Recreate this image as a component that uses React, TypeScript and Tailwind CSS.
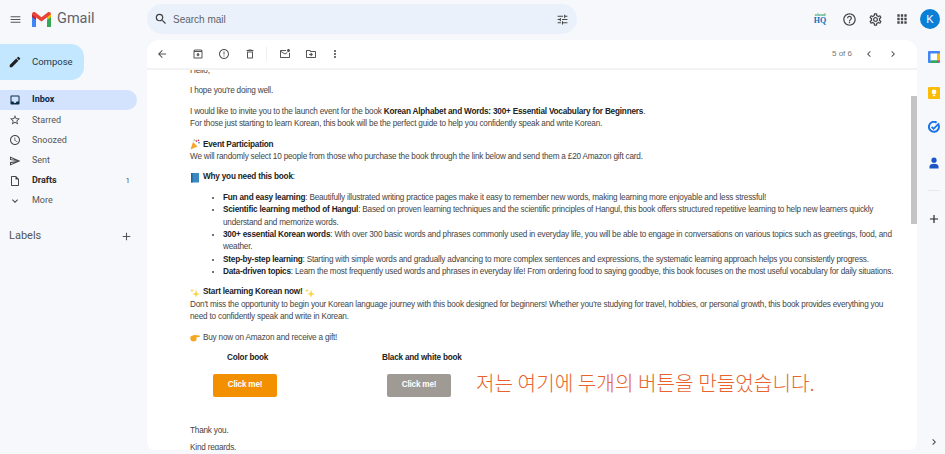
import React from 'react';
import {
  MdMenu, MdSearch, MdTune, MdHelpOutline, MdOutlineSettings, MdApps, MdEdit, MdInbox, MdOutlineStarBorder,
  MdOutlineAccessTime, MdOutlineSend, MdOutlineInsertDriveFile, MdExpandMore, MdAdd, MdArrowBack,
  MdOutlineArchive, MdErrorOutline, MdOutlineDelete, MdOutlineMarkEmailUnread, MdOutlineDriveFileMove,
  MdMoreVert, MdChevronLeft, MdChevronRight,
} from 'react-icons/md';

const navItems = [
  { label: 'Inbox', icon: MdInbox, active: true },
  { label: 'Starred', icon: MdOutlineStarBorder },
  { label: 'Snoozed', icon: MdOutlineAccessTime },
  { label: 'Sent', icon: MdOutlineSend },
  { label: 'Drafts', icon: MdOutlineInsertDriveFile, bold: true, count: '1' },
  { label: 'More', icon: MdExpandMore },
];

const GmailLogo = () => (
  <svg width="19" height="15" viewBox="0 0 19 15">
    <path d="M0 2.2 L0 15 L4 15 L4 5.5 Z" fill="#4285f4" />
    <path d="M15 5.5 L15 15 L19 15 L19 2.2 Z" fill="#34a853" />
    <path d="M0 2.2 C0 0.4 2 -0.6 3.4 0.5 L9.5 5.2 L15.6 0.5 C17 -0.6 19 0.4 19 2.2 L15 5.5 L9.5 9.6 L4 5.5 Z" fill="#ea4335" />
    <path d="M15 5.5 L19 2.2 L19 5 L15 8 Z" fill="#fbbc04" />
    <path d="M0 2.2 L4 5.5 L4 8 L0 5 Z" fill="#c5221f" />
  </svg>
);

const Popper = () => (
  <svg width="10" height="11" viewBox="0 0 10 11" className="shrink-0">
    <path d="M0.5 10.5 L3 3 L7.5 7.5 Z" fill="#f4a62a" />
    <path d="M6 1 L6.6 3" stroke="#e0457b" strokeWidth="1.2" />
    <path d="M8 4 L9.8 3.6" stroke="#3b88c3" strokeWidth="1.2" />
    <circle cx="8.4" cy="1.4" r="0.8" fill="#dd2e44" />
    <circle cx="4.2" cy="1" r="0.7" fill="#77b255" />
  </svg>
);

const BlueBook = () => (
  <svg width="10" height="11" viewBox="0 0 10 11" className="shrink-0">
    <rect x="1" y="1" width="8" height="9.5" fill="#3b88c3" />
    <rect x="1" y="1" width="1.6" height="9.5" fill="#226699" />
  </svg>
);

const Sparkle = () => (
  <svg width="10" height="10" viewBox="0 0 10 10" className="shrink-0">
    <path d="M6 1.5 L7 5 L9.8 6 L7 7 L6 9.8 L5 7 L2.2 6 L5 5 Z" fill="#fbd44a" />
    <path d="M2 0.5 L2.5 2 L4 2.5 L2.5 3 L2 4.5 L1.5 3 L0 2.5 L1.5 2 Z" fill="#fbd44a" />
  </svg>
);

const PointHand = () => (
  <svg width="10" height="9" viewBox="0 0 10 9" className="shrink-0">
    <path d="M0.5 3.5 L4 2 L9.5 2.6 C10 3 10 3.8 9.4 4 L6.5 4.2 L6.5 7 C6 8.4 3 8.8 1.5 8 C0.4 7 0 5 0.5 3.5 Z" fill="#f5a623" />
  </svg>
);

const Line = ({ children }: { children: React.ReactNode }) => <div className="flex items-center gap-[3px]">{children}</div>;

const App: React.FC = () => {
  return (
    <div className="flex flex-col w-[945px] h-[454px] overflow-hidden bg-[#f6f8fc] font-['Liberation_Sans',sans-serif] text-[#444746]">
      {/* Top bar */}
      <header className="flex items-center h-[38px] shrink-0">
        <div className="flex items-center w-[147px] shrink-0 pl-[9px]">
          <MdMenu className="w-[13px] h-[13px] text-[#555]" />
          <span className="ml-[10px]"><GmailLogo /></span>
          <span className="ml-[6px] text-[14.5px] text-[#5f6368] font-['Roboto',sans-serif]">Gmail</span>
        </div>
        <div className="flex items-center w-[430px] h-[30px] rounded-full bg-[#eaf1fb] pl-[7px] pr-[8px]">
          <MdSearch className="w-[14px] h-[14px] text-[#3c4043]" />
          <span className="ml-[5px] text-[10px] text-[#5f6368]">Search mail</span>
          <MdTune className="ml-auto w-[13px] h-[13px] text-[#444746]" />
        </div>
        <div className="flex items-center ml-auto pr-[5px]">
          <div className="flex flex-col items-center w-[16px] leading-none mr-[14px]">
            <span className="text-[4px] font-bold text-[#1aa260]">cloud</span>
            <span className="text-[8px] font-bold text-[#0f6fb8] font-['Liberation_Serif',serif]">HQ</span>
          </div>
          <MdHelpOutline className="w-[15px] h-[15px] text-[#444746]" />
          <MdOutlineSettings className="ml-[11px] w-[15px] h-[15px] text-[#444746]" />
          <MdApps className="ml-[12px] w-[14px] h-[14px] text-[#444746]" />
          <div className="ml-[11px] flex items-center justify-center w-[20px] h-[20px] rounded-full bg-[#0a7fd6] text-white text-[11px]">K</div>
        </div>
      </header>

      <div className="flex flex-1 min-h-0">
        {/* Sidebar */}
        <aside className="flex flex-col w-[147px] shrink-0 font-['Roboto',sans-serif]">
          <div className="mt-[6px] flex items-center w-[84px] h-[36px] rounded-r-[13px] bg-[#c2e7ff] pl-[8px]">
            <MdEdit className="w-[14px] h-[14px] text-[#1f1f1f]" />
            <span className="ml-[10px] text-[9.5px] text-[#1f3a4d]">Compose</span>
          </div>
          <nav className="mt-[10px] flex flex-col">
            {navItems.map(item => (
              <div
                key={item.label}
                className={`flex items-center h-[20.2px] w-[137px] rounded-r-full pl-[9px] pr-[7px] text-[9px] ${item.active ? 'bg-[#d3e3fd] text-[#0b2a4a] font-bold' : item.bold ? 'font-bold text-[#2b2b2b]' : 'text-[#555]'}`}
              >
                <item.icon className={`w-[12px] h-[12px] ${item.active ? 'text-[#0b2a4a]' : 'text-[#444746]'}`} />
                <span className="ml-[11px]">{item.label}</span>
                {item.count && <span className="ml-auto text-[8px] font-normal text-[#555]">{item.count}</span>}
              </div>
            ))}
          </nav>
          <div className="mt-[17px] flex items-center justify-between w-[133px] pl-[9px] text-[11px] text-[#555]">
            <span>Labels</span>
            <MdAdd className="w-[13px] h-[13px]" />
          </div>
        </aside>

        {/* Message card */}
        <main className="flex flex-col w-[770px] h-[410px] mt-[2px] rounded-t-[12px] rounded-b-[8px] bg-white shrink-0 overflow-hidden">
          <div className="flex items-center h-[30px] shrink-0 pl-[9px] pr-[18px] border-b-2 border-[#f3f3f3] text-[#555]">
            <MdArrowBack className="w-[12px] h-[12px]" />
            <MdOutlineArchive className="ml-[24px] w-[12px] h-[12px]" />
            <MdErrorOutline className="ml-[14px] w-[12px] h-[12px]" />
            <MdOutlineDelete className="ml-[14px] w-[12px] h-[12px]" />
            <span className="ml-[10px] h-[14px] w-px bg-[#eee]" />
            <MdOutlineMarkEmailUnread className="ml-[12px] w-[12px] h-[12px]" />
            <MdOutlineDriveFileMove className="ml-[14px] w-[12px] h-[12px]" />
            <MdMoreVert className="ml-[12px] w-[12px] h-[12px]" />
            <span className="ml-auto text-[8px] text-[#777]">5 of 6</span>
            <MdChevronLeft className="ml-[11px] w-[12px] h-[12px]" />
            <MdChevronRight className="ml-[12px] w-[12px] h-[12px]" />
          </div>

          <div className="flex flex-1 min-h-0">
            <div className="flex-1 min-w-0 overflow-hidden pl-[43px] pr-[12px] text-[8.2px] tracking-[-0.2px] leading-[12.3px] text-[#444]">
              <div className="-mt-[5.5px] flex flex-col gap-[8.3px]">
                <p>Hello,</p>
                <p>I hope you're doing well.</p>
                <p>
                  I would like to invite you to the launch event for the book <b className="text-[#222]">Korean Alphabet and Words: 300+ Essential Vocabulary for Beginners</b>.<br />
                  For those just starting to learn Korean, this book will be the perfect guide to help you confidently speak and write Korean.
                </p>
                <div>
                  <Line><Popper /><b className="text-[#222]">Event Participation</b></Line>
                  <p>We will randomly select 10 people from those who purchase the book through the link below and send them a £20 Amazon gift card.</p>
                </div>
                <Line><BlueBook /><span><b className="text-[#222]">Why you need this book</b>:</span></Line>
                <ul className="list-disc pl-[33px]">
                  <li><b className="text-[#222]">Fun and easy learning</b>: Beautifully illustrated writing practice pages make it easy to remember new words, making learning more enjoyable and less stressful!</li>
                  <li><b className="text-[#222]">Scientific learning method of Hangul</b>: Based on proven learning techniques and the scientific principles of Hangul, this book offers structured repetitive learning to help new learners quickly understand and memorize words.</li>
                  <li><b className="text-[#222]">300+ essential Korean words</b>: With over 300 basic words and phrases commonly used in everyday life, you will be able to engage in conversations on various topics such as greetings, food, and weather.</li>
                  <li><b className="text-[#222]">Step-by-step learning</b>: Starting with simple words and gradually advancing to more complex sentences and expressions, the systematic learning approach helps you consistently progress.</li>
                  <li><b className="text-[#222]">Data-driven topics</b>: Learn the most frequently used words and phrases in everyday life! From ordering food to saying goodbye, this book focuses on the most useful vocabulary for daily situations.</li>
                </ul>
                <div>
                  <Line><Sparkle /><b className="text-[#222]">Start learning Korean now!</b><Sparkle /></Line>
                  <p>Don't miss the opportunity to begin your Korean language journey with this book designed for beginners! Whether you're studying for travel, hobbies, or personal growth, this book provides everything you need to confidently speak and write in Korean.</p>
                </div>
                <Line><PointHand /><span>Buy now on Amazon and receive a gift!</span></Line>
                <div className="flex items-end">
                  <div className="flex flex-col w-[197px]">
                    <b className="pl-[37px] text-[#222]">Color book</b>
                    <span className="mt-[9px] ml-[23px] flex items-center justify-center w-[64px] h-[23px] rounded-[2px] bg-[#f39000] text-white font-bold">Click me!</span>
                  </div>
                  <div className="flex flex-col w-[89px]">
                    <b className="whitespace-nowrap -ml-[5px] text-[#222]">Black and white book</b>
                    <span className="mt-[9px] flex items-center justify-center w-[64px] h-[23px] rounded-[2px] bg-[#a09a94] text-white font-bold">Click me!</span>
                  </div>
                  <span className="mb-[1px] whitespace-nowrap font-['Noto_Sans_CJK_KR',sans-serif] font-light text-[20.2px] tracking-normal leading-[26px] text-[#e8642c]">저는 여기에 두개의 버튼을 만들었습니다.</span>
                </div>
                <div className="mt-[20px] flex flex-col gap-[4.5px]">
                  <p>Thank you.</p>
                  <p>Kind regards,</p>
                </div>
              </div>
            </div>
            {/* Scrollbar */}
            <div className="w-[6px] shrink-0">
              <div className="mt-[26px] h-[128px] bg-[#c4c4c4]" />
            </div>
          </div>
        </main>

        {/* Side panel */}
        <aside className="flex flex-col items-center flex-1 pt-[13px] pl-[6px]">
          <svg width="12" height="12" viewBox="0 0 12 12">
            <rect width="12" height="12" rx="1" fill="#4285f4" />
            <rect x="2.5" y="2.5" width="7" height="7" fill="#fff" />
            <rect x="9.5" y="2.5" width="2.5" height="7" fill="#fbbc04" />
            <rect x="2.5" y="9.5" width="7" height="2.5" fill="#34a853" />
            <path d="M9.5 9.5 H12 L9.5 12 Z" fill="#ea4335" />
          </svg>
          <svg width="12" height="12" viewBox="0 0 12 12" className="mt-[24px]">
            <rect width="12" height="12" rx="1" fill="#fbbc04" />
            <circle cx="6" cy="5" r="2.4" fill="#fff" />
            <rect x="4.8" y="8" width="2.4" height="1.2" fill="#fff" />
          </svg>
          <svg width="12" height="12" viewBox="0 0 12 12" className="mt-[22px]">
            <path d="M10.4 3.6 A5 5 0 1 1 8.6 1.6" fill="none" stroke="#1a73e8" strokeWidth="2" />
            <path d="M3.6 5.8 L5.6 7.8 L11 2.4" fill="none" stroke="#1a73e8" strokeWidth="1.8" />
          </svg>
          <svg width="12" height="12" viewBox="0 0 12 12" className="mt-[24px]">
            <circle cx="6" cy="3.2" r="2.6" fill="#1a56c4" />
            <path d="M1.5 11.5 V9.5 C1.5 7.5 4 6.8 6 6.8 C8 6.8 10.5 7.5 10.5 9.5 V11.5 Z" fill="#1a56c4" />
          </svg>
          <span className="mt-[21px] w-[12px] h-px bg-[#e6e8ec]" />
          <MdAdd className="mt-[21px] w-[14px] h-[14px] text-[#222]" />
          <MdChevronRight className="mt-auto mb-[6px] w-[12px] h-[12px] text-[#444746]" />
        </aside>
      </div>
    </div>
  );
};

export default App;
